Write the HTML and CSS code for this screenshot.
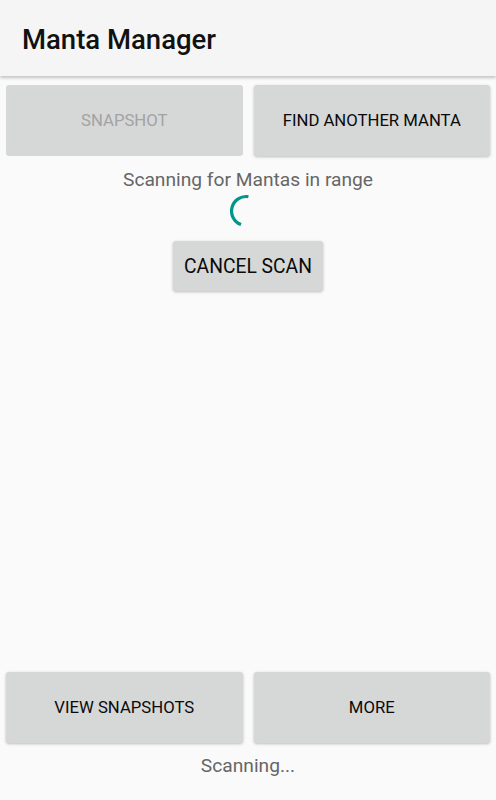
FILE: index.html
```html
<!DOCTYPE html>
<html>
<head>
  <title>Manta Manager</title>
  <link rel="stylesheet" href="styles.css">
</head>
<body>
  <div class="app">
    <div class="toolbar">
      <h1>Manta Manager</h1>
    </div>

    <div class="button-row top-row">
      <button class="btn" disabled>SNAPSHOT</button>
      <button class="btn">FIND ANOTHER MANTA</button>
    </div>

    <div class="scan-area">
      <p class="status">Scanning for Mantas in range</p>
      <svg class="spinner" width="36" height="36" viewBox="0 0 36 36">
        <path d="M20.4 3.7 A14.5 14.5 0 0 0 13 31.6" fill="none" stroke="#009688" stroke-width="3.2"/>
      </svg>
      <button class="btn cancel">CANCEL SCAN</button>
    </div>

    <div class="button-row bottom-row">
      <button class="btn">VIEW SNAPSHOTS</button>
      <button class="btn">MORE</button>
    </div>
    <p class="status footer">Scanning...</p>
  </div>
</body>
</html>
```

FILE: styles.css
```css
html, body {
  margin: 0;
  height: 100%;
}

body {
  font-family: Roboto, "Liberation Sans", sans-serif;
  background-color: #fafafa;
  color: #000;
}

.app {
  display: flex;
  flex-direction: column;
  height: 100%;
}

.toolbar {
  height: 76px;
  background-color: #f5f5f5;
  display: flex;
  align-items: center;
  padding-left: 22px;
  box-shadow: 0 2px 3px rgba(0, 0, 0, 0.22);
  position: relative;
  z-index: 1;
}

.toolbar h1 {
  margin: 0 0 -2px;
  font-size: 27.5px;
  font-weight: 500;
  color: #111;
}

.button-row {
  display: flex;
  gap: 11px;
  padding: 0 6px;
}

.top-row {
  margin-top: 9px;
}

.btn {
  font-family: Roboto, "Liberation Sans", sans-serif;
  font-size: 16.7px;
  font-weight: 400;
  color: #0a0a0a;
  background-color: #d6d7d7;
  border: none;
  border-radius: 3px;
  box-shadow: 0 1px 3px rgba(0, 0, 0, 0.25);
  cursor: pointer;
}

.button-row .btn {
  flex: 1;
  height: 71px;
}

.btn:disabled {
  color: #a3a3a3;
  box-shadow: none;
  cursor: default;
}

.scan-area {
  flex: 1;
  display: flex;
  flex-direction: column;
  align-items: center;
}

.status {
  margin: 0;
  font-size: 19.2px;
  line-height: 23px;
  color: #666;
  text-align: center;
}

.scan-area .status {
  margin-top: 12px;
}

.spinner {
  display: block;
  margin-top: 2px;
  margin-right: 4px;
}

.cancel {
  margin-top: 12px;
  height: 50px;
  padding: 0 11px;
  font-size: 19.3px;
}

.bottom-row {
  margin-bottom: 11px;
}

.footer {
  height: 46px;
}
```
